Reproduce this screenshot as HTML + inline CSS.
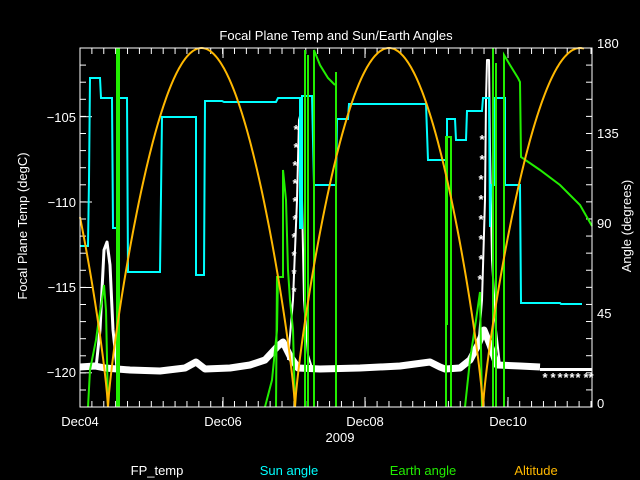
<!DOCTYPE html>
<html><head><meta charset="utf-8"><style>
html,body{margin:0;padding:0;background:#000;width:640px;height:480px;overflow:hidden}
svg{display:block}
text{font-family:"Liberation Sans",sans-serif;font-size:13px}
</style></head><body>
<svg id="s" width="640" height="480" viewBox="0 0 640 480" xmlns="http://www.w3.org/2000/svg">
<rect width="640" height="480" fill="#000"/>
<text x="336" y="40" fill="#fff" text-anchor="middle" font-size="15">Focal Plane Temp and Sun/Earth Angles</text>
<g fill="#fff" text-anchor="end">
<text x="76" y="122">−105</text><text x="76" y="207">−110</text><text x="76" y="292">−115</text><text x="76" y="377">−120</text>
</g>
<g fill="#fff">
<text x="597" y="48">180</text><text x="597" y="138">135</text><text x="597" y="228">90</text><text x="597" y="318">45</text><text x="597" y="408">0</text>
</g>
<text transform="translate(27,226) rotate(-90)" fill="#fff" text-anchor="middle">Focal Plane Temp (degC)</text>
<text transform="translate(631,226) rotate(-90)" fill="#fff" text-anchor="middle">Angle (degrees)</text>
<g fill="#fff" text-anchor="middle">
<text x="80" y="426">Dec04</text><text x="223" y="426">Dec06</text><text x="365" y="426">Dec08</text><text x="508" y="426">Dec10</text>
<text x="340" y="442">2009</text>
</g>
<g text-anchor="middle">
<text x="157" y="475" fill="#fff">FP_temp</text>
<text x="289" y="475" fill="#00ffff">Sun angle</text>
<text x="423" y="475" fill="#22ee00">Earth angle</text>
<text x="536" y="475" fill="#ffb800">Altitude</text>
</g>
<g id="ticks" stroke="#fff" stroke-width="1"></g>

<g fill="none" stroke="#fff" stroke-linejoin="round">
<polyline stroke-width="7" points="80,367 95,366 105,368 130,370 160,371 185,368 196,362 205,369 230,368 250,365 265,360 278,346 283,342 290,356 298,368 320,369 360,368 400,366 430,362 440,367 445,369 460,368 470,360 478,345 484,330 490,345 497,365 520,366 540,367"/>
<polyline stroke-width="3" points="96,368 100,330 104,250 107,242 110,265 113,330 117,368"/>
<polyline stroke-width="2" points="288,360 293,300 297,200 299,120 301,112 302,200 304,300 308,355 312,368"/>
<polyline stroke-width="2" points="478,350 482,300 485,200 486,100 487,60 489,60 490,150 492,260 496,330 500,366"/>
</g>
<g fill="#fff" font-size="17" font-weight="bold" text-anchor="middle">
<text x="296" y="134">*</text><text x="296" y="152">*</text><text x="295" y="170">*</text><text x="295" y="188">*</text><text x="295" y="206">*</text><text x="295" y="224">*</text><text x="294" y="242">*</text><text x="294" y="260">*</text><text x="294" y="278">*</text><text x="294" y="296">*</text>
<text x="482" y="144">*</text><text x="482" y="164">*</text><text x="481" y="184">*</text><text x="481" y="204">*</text><text x="481" y="224">*</text><text x="481" y="244">*</text><text x="481" y="264">*</text><text x="480" y="284">*</text>
<text x="545" y="382">*</text><text x="553" y="382">*</text><text x="560" y="382">*</text><text x="566" y="382">*</text><text x="572" y="382">*</text><text x="578" y="382">*</text><text x="586" y="382">*</text><text x="591" y="382">*</text>
</g>
<rect x="540" y="368" width="52" height="3" fill="#fff"/>

<polyline fill="none" stroke="#00ffff" stroke-width="2" points="80,246 88,246 89,180 90,78 100,78 101,98 112,98 113,228 117,228 118,98 127,98 128,272 160,272 162,117 196,117 196,275 204,275 205,101 222,101 224,102 276,102 278,98 300,98 300,228 302,228 302,96 312,96 314,185 336,185 337,119 348,119 349,104 426,104 428,160 447,160 447,119 455,119 456,140 466,140 467,111 482,111 483,98 489,98 490,227 491,185 494,185 495,98 505,98 505,185 520,185 521,303 560,303 561,304 582,304"/>

<g fill="none" stroke="#22ee00" stroke-width="2">
<polyline points="88,407 90,370 96,340 99,318 102,300 104,285 106,310 108,407"/>
<line x1="118" y1="48" x2="118" y2="407" stroke-width="4"/>
<polyline points="265,407 272,380 277,330 278,276"/>
<polyline points="276,407 277,277 283,277 283,170 286,200 288,270 290,300 293,330 295,407"/>
<line x1="305" y1="50" x2="305" y2="407"/>
<line x1="308" y1="55" x2="308" y2="407"/>
<polyline points="314,407 314,50 320,65 328,78 335,85"/>
<line x1="336" y1="72" x2="336" y2="407"/>
<line x1="447" y1="325" x2="447" y2="137"/>
<polyline points="446,407 446,137 451,137 451,407"/>
<polyline points="465,407 470,360 476,320 480,292 482,407"/>
<line x1="493" y1="48" x2="493" y2="407"/>
<line x1="496" y1="63" x2="496" y2="407"/>
<polyline points="504,407 504,55 510,65 518,78 520,82 521,157 540,170 560,185 580,205 592,226"/>
</g>

<path id="alt" fill="none" stroke="#ffb800" stroke-width="2" d=""/>
<rect x="80" y="48" width="512" height="359" fill="none" stroke="#fff" stroke-width="1"/>
</svg>
<script>
(function(){
var t=document.getElementById('ticks'),h='';
for(var x=80;x<=592;x+=71.3/6){var L=6;h+='<line x1="'+x+'" y1="407" x2="'+x+'" y2="'+(407-L)+'"/><line x1="'+x+'" y1="48" x2="'+x+'" y2="'+(48+L)+'"/>';}
[223,365,508].forEach(function(x){h+='<line x1="'+x+'" y1="407" x2="'+x+'" y2="397"/><line x1="'+x+'" y1="48" x2="'+x+'" y2="58"/>';});
for(var y=48;y<=407;y+=17.1){h+='<line x1="80" y1="'+y+'" x2="86" y2="'+y+'"/>';}
[116.7,202,287.5,372.8].forEach(function(y){h+='<line x1="80" y1="'+y+'" x2="92" y2="'+y+'"/>';});
for(var i=0;i<=21;i++){var y=48+i*359/21;h+='<line x1="592" y1="'+y+'" x2="586" y2="'+y+'"/>';}
t.innerHTML=h;
var z=[-80,108,295,483,677],pts=[];
for(var x=80;x<=584;x++){
  var k=0;
  for(var j=0;j<4;j++){if(x>=z[j]&&x<=z[j+1]){k=j;break;}}
  var s=Math.abs(Math.sin(Math.PI*(x-z[k])/(z[k+1]-z[k])));
  var a=180*Math.pow(s,0.8);
  if(!isFinite(a))a=0;
  var y=407-a*359/180;
  pts.push(x+','+y.toFixed(1));
}
document.getElementById('alt').setAttribute('d','M'+pts.join(' L'));
})();
</script>
</body></html>
